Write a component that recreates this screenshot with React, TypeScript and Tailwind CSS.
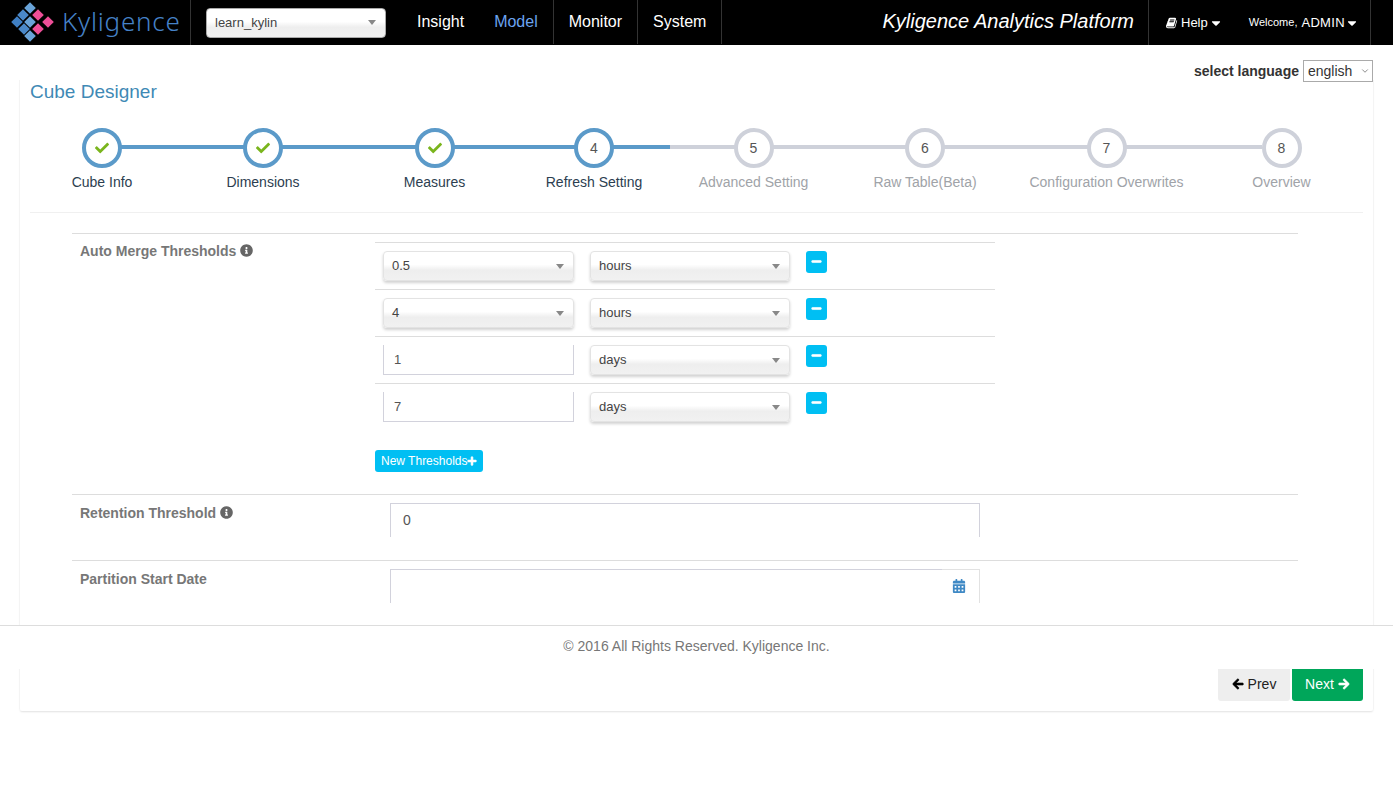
import { ChevronDown } from "lucide-react";
import { FaArrowLeft, FaArrowRight, FaCalendarAlt, FaCaretDown, FaCheck, FaInfoCircle, FaMinus, FaPlus } from "react-icons/fa";

const steps = [
  { label: "Cube Info", done: true, cx: 102 },
  { label: "Dimensions", done: true, cx: 263 },
  { label: "Measures", done: true, cx: 434.5 },
  { label: "Refresh Setting", num: 4, active: true, cx: 594 },
  { label: "Advanced Setting", num: 5, cx: 753.5 },
  { label: "Raw Table(Beta)", num: 6, cx: 925 },
  { label: "Configuration Overwrites", num: 7, cx: 1106.5 },
  { label: "Overview", num: 8, cx: 1281.5 },
];

// logo diamonds, centre x / y / colour
const logo = [
  [30, 8, "#69a3d8"],
  [38, 15, "#ee4f98"],
  [48, 22, "#ee4f98"],
  [23, 15, "#4a88c8"],
  [30, 22, "#69a3d8"],
  [38, 29, "#ee4f98"],
  [17, 22, "#3f7fc4"],
  [24, 29, "#4a88c8"],
  [30, 36, "#69a3d8"],
] as const;

function Chosen({ value, className }: { value: string; className: string }) {
  return (
    <div className={`flex h-[30px] items-center justify-between rounded-[4px] border border-[#e3e3e3] bg-[linear-gradient(#ffffff_0%,#ffffff_45%,#eeeeee_65%,#f1f1f1_100%)] pl-2 pr-[9px] text-[13px] text-[#444] shadow-[0_2px_3px_rgba(0,0,0,0.18)] ${className}`}>
      <span>{value}</span>
      <span className="h-0 w-0 border-x-[4px] border-t-[5px] border-x-transparent border-t-[#888]" />
    </div>
  );
}

function Row({ first, second, input }: { first: string; second: string; input?: boolean }) {
  return (
    <div className="flex h-[47px] border-t border-[#ddd] pl-2">
      {input ? (
        <div className="mt-2 flex h-[30px] w-[191px] items-center border-b border-l border-r border-[#d2d2dc] pl-[10px] text-[13px] text-[#555]">{first}</div>
      ) : (
        <Chosen value={first} className="mt-2 w-[191px]" />
      )}
      <Chosen value={second} className="ml-4 mt-2 w-[200px]" />
      <button className="ml-4 mt-2 flex h-[22px] w-[21px] items-center justify-center rounded-[3px] bg-[#00bff3] pb-[2px] text-white">
        <FaMinus size={11} className="stroke-[30px]" />
      </button>
    </div>
  );
}

export default function App() {
  return (
    <div className="relative h-[800px] overflow-hidden bg-white font-['Liberation_Sans',Arial,sans-serif] text-[14px] text-[#333]">
      {/* top bar */}
      <header className="flex h-[45px] items-stretch bg-black text-white">
        <div className="flex w-[191px] items-center border-r border-[#333]">
          <svg width="54" height="45" viewBox="0 0 54 45" className="shrink-0">
            {logo.map(([x, y, c]) => (
              <polygon key={`${x}-${y}`} points={`${x},${y - 5.8} ${x + 5.8},${y} ${x},${y + 5.8} ${x - 5.8},${y}`} fill={c} />
            ))}
          </svg>
          <span className="ml-[8px] pb-[3px] font-['Noto_Sans',sans-serif] text-[26px] font-light leading-none tracking-[0.75px] text-[#4682c8]">Kyligence</span>
        </div>
        <div className="flex items-center pl-[15px] pr-4">
          <Chosen value="learn_kylin" className="w-[180px] !border-[#aaa] text-[#444]" />
        </div>
        <nav className="flex pb-px text-[16px]">
          <a className="flex items-center px-[15px]">Insight</a>
          <a className="flex items-center border-r border-[#333] px-[15px] text-[#6ba4f0]">Model</a>
          <a className="flex items-center border-r border-[#333] px-[15px]">Monitor</a>
          <a className="flex items-center border-r border-[#333] px-[15px]">System</a>
        </nav>
        <div className="ml-auto flex items-center border-r border-[#333] pb-[3px] pr-[14px] text-[20px] italic">Kyligence Analytics Platform</div>
        <div className="mr-[22px] flex w-[222px] items-center border-r border-[#333] pl-[17px] text-[13px]">
          <svg width="12" height="12" viewBox="0 0 1792 1792" fill="currentColor">
            <path d="M1639 478q40 57 18 129l-275 906q-19 64-76.5 107.5t-122.5 43.5h-923q-77 0-148.5-53.5t-99.5-131.5q-24-67-2-127 0-4 3-27t4-37q1-8-3-21.5t-3-19.5q2-11 8-21t16.5-23.5 16.5-23.5q23-38 45-91.5t30-91.5q3-10 .5-30t-.5-28q3-11 17-28t17-23q21-36 42-92t25-90q1-9-2.5-32t.5-28q4-13 22-30.5t22-22.5q19-26 42.5-84.5t27.5-96.5q1-8-3-25.5t-2-26.5q2-8 9-18t18-23 17-21q8-12 16.5-30.5t15-35 16-36 19.5-32 26.5-23.5 36-11.5 47.5 5.5l-1 3q38-9 51-9h761q74 0 114 56t18 130l-274 906q-36 119-71.5 153.5t-128.5 34.5h-869q-27 0-38 15-11 16-1 43 24 70 144 70h923q29 0 56-15.5t35-41.5l300-987q7-22 5-57 38 15 59 43zm-1064 2q-4 13 2 22.5t20 9.5h608q13 0 25.5-9.5t16.5-22.5l21-64q4-13-2-22.5t-20-9.5h-608q-13 0-25.5 9.5t-16.5 22.5zm-83 256q-4 13 2 22.5t20 9.5h608q13 0 25.5-9.5t16.5-22.5l21-64q4-13-2-22.5t-20-9.5h-608q-13 0-25.5 9.5t-16.5 22.5z" />
          </svg>
          <span className="ml-[3px]">Help</span>
          <FaCaretDown size={14} className="ml-[1px]" />
          <span className="ml-[26px] text-[11px]">Welcome,</span>
          <span className="ml-[4px] text-[13px] tracking-[0.3px]">ADMIN</span>
          <FaCaretDown size={14} />
        </div>
      </header>

      {/* language picker */}
      <div className="flex h-[35px] items-center justify-end pr-5 pt-[17px]">
        <span className="text-[14px] font-bold text-[#333]">select language</span>
        <div className="relative ml-1">
          <select defaultValue="english" className="block h-[22px] w-[70px] appearance-none border border-[#aaa] bg-white pl-1 text-[14px] text-[#333]">
            <option>english</option>
          </select>
          <ChevronDown size={10} className="pointer-events-none absolute right-[3px] top-[6px] text-[#777]" />
        </div>
      </div>

      {/* cube designer card */}
      <main className="mx-[19px] h-[631px] rounded-b-[3px] border-x border-[#f4f4f4] px-[10px] shadow-[0_2px_2px_-1px_rgba(0,0,0,0.12)]">
        <h1 className="text-[19px] leading-[24px] text-[#3f89b5]">Cube Designer</h1>

        <div className="mt-6 h-[85px] border-b border-[#f0f0f0]">
          <div className="relative h-full">
            <div className="absolute left-[72px] top-[17px] h-1 w-[568px] bg-[#5b9ac9]" />
            <div className="absolute left-[640px] top-[17px] h-1 w-[592px] bg-[#ced1da]" />
            {steps.map((s) => (
              <div key={s.label} className="absolute top-0 flex w-[200px] -translate-x-1/2 flex-col items-center" style={{ left: s.cx - 30 }}>
                <div className={`flex h-10 w-10 items-center justify-center rounded-full border-[4px] bg-white text-[14px] ${s.done || s.active ? "border-[#5b9ac9]" : "border-[#ced1da]"} text-[#555]`}>
                  {s.done ? <FaCheck size={14} className="text-[#7ab51d]" /> : s.num}
                </div>
                <span className={`mt-1 text-[14px] leading-[20px] ${s.done || s.active ? "text-[#2c3e50]" : "text-[#a0a3a8]"}`}>{s.label}</span>
              </div>
            ))}
          </div>
        </div>

        <div className="ml-[42px] mr-[65px] mt-5 text-[14px]">
          <section className="flex h-[261px] border-t border-[#ddd]">
            <div className="flex w-[303px] items-start gap-1 pl-2 pt-[7px] font-bold text-[#777]">
              Auto Merge Thresholds <FaInfoCircle size={13} className="mt-[3px] text-[#666]" />
            </div>
            <div className="mt-2 w-[620px]">
              <Row first="0.5" second="hours" />
              <Row first="4" second="hours" />
              <Row first="1" second="days" input />
              <Row first="7" second="days" input />
              <button className="mt-5 flex h-[22px] items-center rounded-[3px] bg-[#00bff3] px-[6px] text-[12px] text-white">
                New Thresholds<FaPlus size={10} className="stroke-[30px]" />
              </button>
            </div>
          </section>
          <section className="flex h-[66px] border-t border-[#ddd]">
            <div className="flex w-[318px] items-start gap-1 pl-2 pt-[8px] font-bold text-[#777]">
              Retention Threshold <FaInfoCircle size={13} className="mt-[3px] text-[#666]" />
            </div>
            <div className="mt-2 flex h-[34px] w-[590px] items-center border-l border-r border-t border-[#d2d2dc] pl-3 text-[14px] text-[#555]">0</div>
          </section>
          <section className="flex h-[66px] border-t border-[#ddd]">
            <div className="w-[318px] pl-2 pt-2 font-bold text-[#777]">Partition Start Date</div>
            <div className="mt-2 flex h-[34px] w-[590px] border-l border-[#d2d2dc]">
              <div className="flex-1 border-t border-[#d2d2dc]" />
              <div className="flex w-[38px] items-center justify-center border-r border-t border-[#e2e2e2] pb-[2px] pr-[3px]">
                <FaCalendarAlt size={14} className="text-[#3f89c5]" />
              </div>
            </div>
          </section>
        </div>
      </main>

      {/* footer sits over the card */}
      <footer className="absolute inset-x-0 top-[625px] flex h-[44px] items-start justify-center border-t border-[#ddd] bg-white pt-[10px] text-[14px] text-[#777]">
        © 2016 All Rights Reserved. Kyligence Inc.
      </footer>
      <div className="absolute right-[30px] top-[669px] flex gap-[2px]">
        <button className="flex h-[32px] w-[72px] items-center justify-center gap-1 rounded-b-[3px] bg-[#eeeeee] pb-[2px] text-[14px] text-[#222]">
          <FaArrowLeft size={12} className="stroke-[30px] text-black" /> Prev
        </button>
        <button className="flex h-[32px] w-[71px] items-center justify-center gap-1 rounded-b-[3px] bg-[#00a65a] pb-[2px] text-[14px] text-white">
          Next <FaArrowRight size={12} className="stroke-[30px]" />
        </button>
      </div>
    </div>
  );
}
